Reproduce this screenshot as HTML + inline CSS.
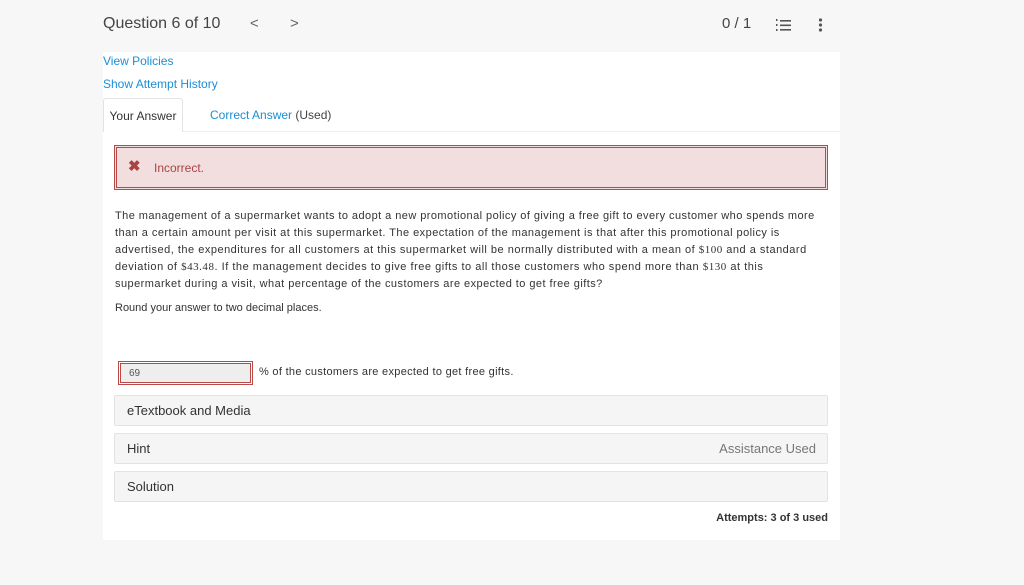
<!DOCTYPE html>
<html><head><meta charset="utf-8"><style>
body{margin:0;width:1024px;height:585px;background:#f7f7f7;font-family:"Liberation Sans",sans-serif;color:#333;position:relative;overflow:hidden}
.a{position:absolute}
.link{color:#1a8fd6;font-size:12px}
.p{font-size:11px;line-height:17px;color:#333;white-space:nowrap}
.acc{position:absolute;left:114px;width:714px;height:31px;background:#f5f5f5;border:1px solid #e3e3e3;border-radius:2px;font-size:13px;line-height:30px;color:#333;box-sizing:border-box;padding-left:12px}
.s{font-family:'Liberation Serif',serif}
</style></head><body>
<div class="a" style="left:103px;top:15px;font-size:16px;color:#444">Question 6 of 10</div>
<div class="a" style="left:250px;top:15px;font-size:15px;color:#666">&lt;</div>
<div class="a" style="left:290px;top:15px;font-size:15px;color:#666">&gt;</div>
<div class="a" style="left:722px;top:15px;font-size:15px;color:#444">0 / 1</div>
<svg class="a" style="left:776px;top:18px" width="16" height="14"><g fill="#555"><rect x="0" y="1" width="1.5" height="2"/><rect x="0" y="6" width="1.5" height="2"/><rect x="0" y="11" width="1.5" height="2"/><rect x="4" y="2" width="11" height="1.6"/><rect x="4" y="6.5" width="11" height="1.6"/><rect x="4" y="11" width="11" height="1.6"/></g></svg>
<svg class="a" style="left:818px;top:18px" width="5" height="14"><g fill="#555"><circle cx="2.5" cy="2" r="1.6"/><circle cx="2.5" cy="7" r="1.6"/><circle cx="2.5" cy="12" r="1.6"/></g></svg>
<div class="a" style="left:103px;top:52px;width:737px;height:488px;background:#fff"></div>
<div class="a link" style="left:103px;top:54px">View Policies</div>
<div class="a link" style="left:103px;top:77px">Show Attempt History</div>
<div class="a" style="left:103px;top:98px;width:80px;height:34px;border:1px solid #e3e3e3;border-bottom:none;border-radius:3px 3px 0 0;background:#fff;box-sizing:border-box;font-size:12px;line-height:34px;text-align:center;color:#333">Your Answer</div>
<div class="a" style="left:183px;top:131px;width:657px;height:1px;background:#eee"></div>
<div class="a" style="left:210px;top:108px;font-size:12px"><span style="color:#1a8fd6">Correct Answer</span> <span style="color:#444">(Used)</span></div>
<div class="a" style="left:114px;top:145px;width:714px;height:45px;background:#f2dede;border:1px solid #b94a48;box-shadow:inset 0 0 0 1px #f2dede,inset 0 0 0 2px #b94a48;box-sizing:border-box"></div>
<div class="a" style="left:128px;top:157px;font-size:15px;font-weight:bold;color:#a94442">✖</div>
<div class="a" style="left:154px;top:161px;font-size:12px;color:#a94442">Incorrect.</div>
<div class="a p" style="left:115px;top:208px;letter-spacing:0.44px">The management of a supermarket wants to adopt a new promotional policy of giving a free gift to every customer who spends more</div>
<div class="a p" style="left:115px;top:225px;letter-spacing:0.46px">than a certain amount per visit at this supermarket. The expectation of the management is that after this promotional policy is</div>
<div class="a p" style="left:115px;top:242px;letter-spacing:0.5px">advertised, the expenditures for all customers at this supermarket will be normally distributed with a mean of <span class="s">$100</span> and a standard</div>
<div class="a p" style="left:115px;top:259px;letter-spacing:0.52px">deviation of <span class="s">$43.48</span>. If the management decides to give free gifts to all those customers who spend more than <span class="s">$130</span> at this</div>
<div class="a p" style="left:115px;top:276px;letter-spacing:0.45px">supermarket during a visit, what percentage of the customers are expected to get free gifts?</div>
<div class="a p" style="left:115px;top:300px">Round your answer to two decimal places.</div>
<div class="a" style="left:118px;top:361px;width:135px;height:24px;border:1px solid #b94a48;box-shadow:inset 0 0 0 1px #fff,inset 0 0 0 2px #b94a48;background:#eee;box-sizing:border-box;font-size:10px;line-height:24px;padding-left:10px;color:#555">69</div>
<div class="a p" style="left:259px;top:364px;letter-spacing:0.3px">% of the customers are expected to get free gifts.</div>
<div class="acc" style="top:395px">eTextbook and Media</div>
<div class="acc" style="top:433px">Hint<span style="position:absolute;right:11px;color:#777">Assistance Used</span></div>
<div class="acc" style="top:471px">Solution</div>
<div class="a" style="left:700px;top:512px;width:128px;text-align:right;font-size:11px;font-weight:bold;color:#333">Attempts: 3 of 3 used</div>
</body></html>
